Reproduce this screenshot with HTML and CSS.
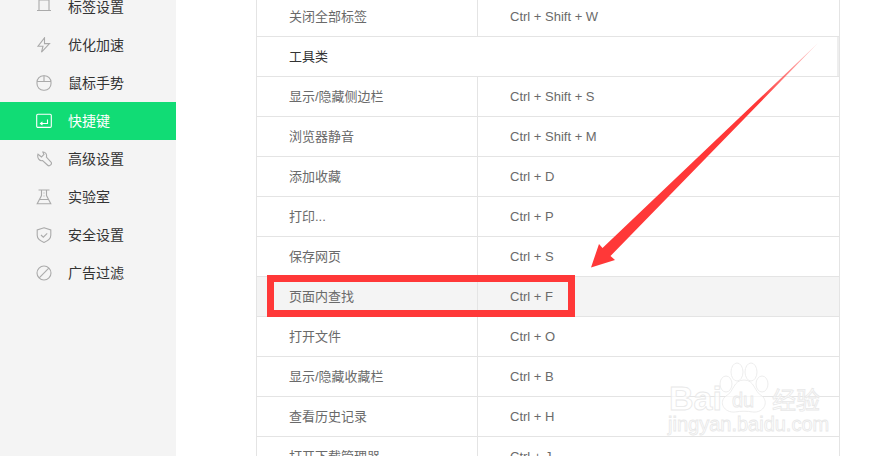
FILE: index.html
```html
<!DOCTYPE html>
<html lang="en">
<head>
    <meta charset="UTF-8">
    <title>快捷键</title>
    <link rel="stylesheet" href="styles.css">
</head>
<body>
<div class="page">
    <ul class="side">
        <li class="side-item">
            <svg class="ico" viewBox="0 0 16 16"><path d="M1 11.500H15M3 11.500V1H13V11.500"/></svg>
            <span>标签设置</span>
        </li>
        <li class="side-item">
            <svg class="ico" viewBox="0 0 16 16"><path d="M8.500 .8L2 9.200H7L5.500 15.200L13.500 6.600H8.500Z"/></svg>
            <span>优化加速</span>
        </li>
        <li class="side-item">
            <svg class="ico" viewBox="0 0 16 16"><rect x="1" y=".8" width="14" height="14.400" rx="6.500"/><path d="M1 6.500H15M8 .8V6.500"/></svg>
            <span>鼠标手势</span>
        </li>
        <li class="side-item on">
            <svg class="ico" viewBox="0 0 16 16"><rect x=".7" y="1.200" width="14.600" height="13.200" rx="1.200"/><path d="M11.500 6.500V10.500H4.500M6.500 8.800L4.500 10.500L6.500 12"/></svg>
            <span>快捷键</span>
        </li>
        <li class="side-item">
            <svg class="ico" viewBox="0 0 16 16"><path d="M2 3.200L5.500 6L8 3.500L6.800 1C9.500 .8 11.200 3.500 10.400 6.200L15 11C15.800 12 15.200 13.500 14.400 14.200C13.500 15 12.200 14.800 11.400 14L6.600 9.600C3.600 10.200 .8 7 2 3.200Z"/></svg>
            <span>高级设置</span>
        </li>
        <li class="side-item">
            <svg class="ico" viewBox="0 0 16 16"><path d="M2.500 1H13.500M5.500 1V6.500L1.200 14.800H14.800L10.500 6.500V1M4 10.500H12"/><path d="M7.500 4H8.500M7.500 7H8.500"/></svg>
            <span>实验室</span>
        </li>
        <li class="side-item">
            <svg class="ico" viewBox="0 0 16 16"><path d="M8 .8L14.800 3V8.200C14.800 11.600 11.400 14 8 15.400C4.600 14 1.200 11.600 1.200 8.200V3Z"/><path d="M5 8L7.300 10.200L11.200 6.400"/></svg>
            <span>安全设置</span>
        </li>
        <li class="side-item">
            <svg class="ico" viewBox="0 0 16 16"><circle cx="8" cy="8" r="7"/><path d="M3.200 12.800L12.800 3.200"/></svg>
            <span>广告过滤</span>
        </li>
    </ul>

    <div class="main">
        <table class="keys">
            <tr><td class="name">关闭全部标签</td><td>Ctrl + Shift + W</td></tr>
            <tr class="group"><td class="name" colspan="2">工具类</td></tr>
            <tr><td class="name">显示/隐藏侧边栏</td><td>Ctrl + Shift + S</td></tr>
            <tr><td class="name">浏览器静音</td><td>Ctrl + Shift + M</td></tr>
            <tr><td class="name">添加收藏</td><td>Ctrl + D</td></tr>
            <tr><td class="name">打印...</td><td>Ctrl + P</td></tr>
            <tr><td class="name">保存网页</td><td>Ctrl + S</td></tr>
            <tr class="hover"><td class="name">页面内查找</td><td>Ctrl + F</td></tr>
            <tr><td class="name">打开文件</td><td>Ctrl + O</td></tr>
            <tr><td class="name">显示/隐藏收藏栏</td><td>Ctrl + B</td></tr>
            <tr><td class="name">查看历史记录</td><td>Ctrl + H</td></tr>
            <tr><td class="name">打开下载管理器</td><td>Ctrl + J</td></tr>
        </table>
    </div>
</div>

<!-- annotation drawn over the screenshot -->
<div class="mark"></div>
<svg class="arrow" viewBox="0 0 870 456">
    <defs>
        <linearGradient id="fade" gradientUnits="userSpaceOnUse" x1="818" y1="43" x2="760" y2="100">
            <stop offset="0" stop-color="#ff3838" stop-opacity=".2"/>
            <stop offset="1" stop-color="#ff3838"/>
        </linearGradient>
    </defs>
    <path fill="url(#fade)" d="M818 43L610.500 256L615 260L591 267.500L599 244L602.500 248Z"/>
</svg>

<svg class="wm" viewBox="0 0 870 456">
    <g class="wm-line">
        <text class="wm-bai" x="669" y="410">Bai</text>
        <ellipse cx="737" cy="372" rx="6" ry="9"/>
        <ellipse cx="751" cy="372" rx="6" ry="9"/>
        <ellipse cx="726" cy="384" rx="6" ry="8"/>
        <ellipse cx="762" cy="384" rx="6" ry="8"/>
        <path d="M744 380C733 380 734 392 726 396C718 402 724 413 735 412C741 411 747 411 753 412C764 413 769 402 762 396C754 392 755 380 744 380Z"/>
        <text class="wm-du" x="732" y="407">du</text>
        <text class="wm-cn" x="772" y="409">经验</text>
        <text class="wm-url" x="668" y="431">jingyan.baidu.com</text>
    </g>
</svg>
</body>
</html>
```

FILE: styles.css
```css
html, body {
    margin: 0;
    height: 456px;
    overflow: hidden;
    background-color: white;
    font-family: "Liberation Sans", "Noto Sans CJK SC", sans-serif;
}

.page {
    display: flex;
    height: 456px;
    overflow: hidden;
}

/* sidebar, scrolled up by 12px in the screenshot */
.side {
    list-style: none;
    width: 176px;
    flex: none;
    margin: 0;
    padding: 0;
    background-color: #f4f4f4;
}

.side-item {
    display: flex;
    align-items: center;
    gap: 16px;
    height: 38px;
    padding-left: 36px;
    font-size: 14px;
    color: #333;
}

.side-item span {
    padding-bottom: 2px;
}

.side-item:first-child {
    margin-top: -12px;
}

.side-item.on {
    background-color: #11dc75;
    color: white;
}

.ico {
    width: 16px;
    height: 16px;
    flex: none;
    fill: none;
    stroke: #aaa;
    stroke-width: 1.1;
}

.on .ico {
    stroke: white;
}

.main {
    flex: 1;
    padding-left: 80px;
}

.keys {
    width: 584px;
    margin-top: -4px;
    border-collapse: collapse;
    table-layout: fixed;
    font-size: 13px;
    color: #6a6a6a;
}

.keys td {
    box-sizing: border-box;
    height: 40px;
    padding: 0 0 0 32px;
    border: 1px solid #e4e4e4;
}

.keys td:first-child {
    width: 221px;
}

.keys .name {
    padding-bottom: 2px;
}

.group td {
    color: #333;
    box-shadow: inset -2px 0 0 #eee;
}

.hover td {
    background-color: #f4f4f4;
}

.mark {
    position: absolute;
    left: 267px;
    top: 275px;
    width: 294px;
    height: 28px;
    border: 7px solid #ff3838;
}

.arrow, .wm {
    position: absolute;
    left: 0;
    top: 0;
    width: 870px;
    height: 456px;
}

.wm-line {
    fill: rgba(255, 255, 255, .7);
    stroke: #e8e8e8;
    stroke-width: .8;
}

.wm-bai {
    font-size: 34px;
    font-weight: bold;
}

.wm-du {
    font-size: 20px;
}

.wm-cn {
    font-size: 24px;
}

.wm-url {
    font-size: 20px;
}
```
